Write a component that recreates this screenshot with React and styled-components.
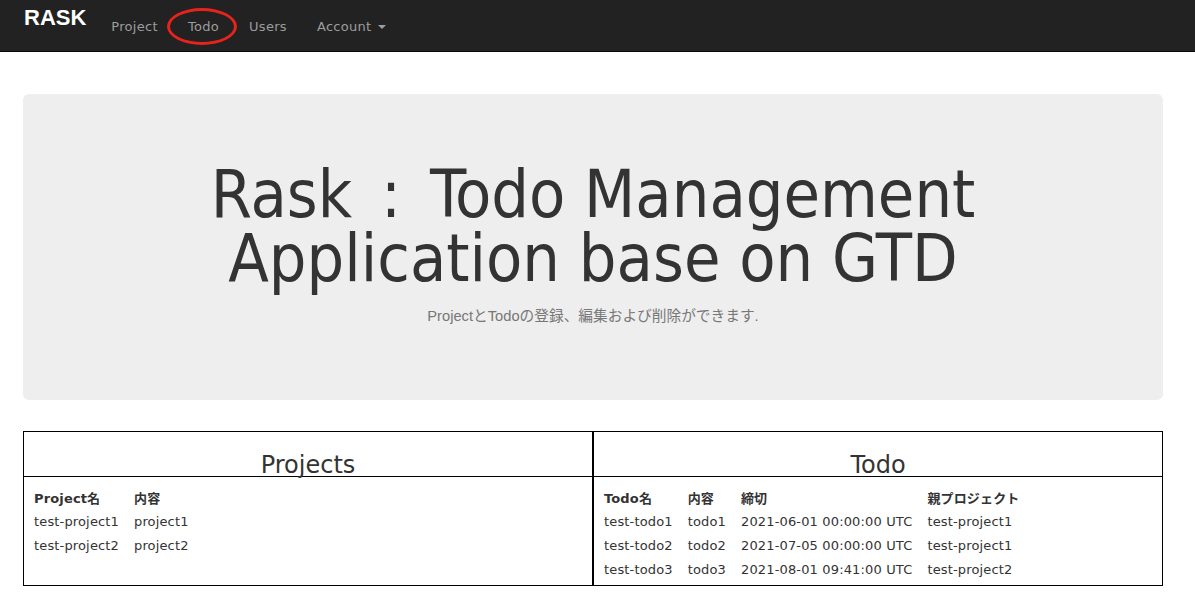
import styled, { createGlobalStyle } from "styled-components";

const GlobalStyle = createGlobalStyle`
    body {
        margin: 0;
        background: #fff;
        color: #333;
        font-family: "DejaVu Sans", "Noto Sans CJK JP", sans-serif;
    }
`;

const Navbar = styled.nav`
    height: 51px;
    background-color: #222;
    border-bottom: 1px solid #080808;
    display: flex;
    align-items: flex-start;
    padding-left: 24px;
`;

const Brand = styled.a`
    font-family: "Liberation Sans", Arial, sans-serif;
    font-weight: 700;
    font-size: 22px;
    line-height: 22px;
    color: #fff;
    margin-top: 7px;
    margin-right: 10px;
`;

const NavItem = styled.a`
    position: relative;
    font-family: "DejaVu Sans", sans-serif;
    font-size: 13px;
    letter-spacing: 0.3px;
    line-height: 18px;
    color: #9d9d9d;
    padding: 18px 15px 0;
    display: flex;
    align-items: center;
`;

const Caret = styled.span`
    display: inline-block;
    width: 0;
    height: 0;
    margin-left: 6px;
    border-top: 4px solid #9d9d9d;
    border-left: 4px solid transparent;
    border-right: 4px solid transparent;
`;

const Circle = styled.span`
    position: absolute;
    left: -6px;
    top: 8px;
    width: 64px;
    height: 31px;
    border: 3px solid #e8231b;
    border-radius: 50%;
`;

const Main = styled.div`
    padding: 42px 32px 0 23px;
`;

const Jumbotron = styled.div`
    background-color: #eee;
    border-radius: 6px;
    padding: 69px 20px 74px;
    text-align: center;
`;

const Title = styled.h1`
    margin: 0;
    font-family: "DejaVu Sans Condensed", "DejaVu Sans", sans-serif;
    font-stretch: condensed;
    font-weight: 400;
    font-size: 66px;
    line-height: 64px;
    color: #333;
`;

const Colon = styled.span`
    margin: 0 10px;
`;

const Lead = styled.p`
    margin: 15px 0 0;
    font-family: "Liberation Sans", "Noto Sans CJK JP", sans-serif;
    font-size: 14.7px;
    line-height: 20px;
    color: #777;
`;

const Panels = styled.div`
    display: flex;
    margin-top: 31px;
`;

const Panel = styled.section`
    flex: 1;
    border: 1px solid #000;
    display: flex;
    flex-direction: column;
`;

const PanelTitle = styled.h2`
    margin: 0;
    height: 45px;
    box-sizing: border-box;
    padding-top: 20px;
    border-bottom: 1px solid #000;
    text-align: center;
    font-weight: 400;
    font-size: 24px;
    line-height: 26px;
    color: #333;
`;

const PanelBody = styled.div`
    padding: 8px 10px 4px;
`;

const Table = styled.table`
    border-collapse: collapse;
    font-size: 13px;
    letter-spacing: 0.15px;
    color: #333;
`;

const Th = styled.th`
    text-align: left;
    font-weight: 700;
    padding: 0 15px 0 0;
    height: 24px;
    white-space: nowrap;
`;

const Td = styled.td`
    padding: 0 15px 0 0;
    height: 24px;
    white-space: nowrap;
`;

const projects = [
    ["test-project1", "project1"],
    ["test-project2", "project2"],
];

const todos = [
    ["test-todo1", "todo1", "2021-06-01 00:00:00 UTC", "test-project1"],
    ["test-todo2", "todo2", "2021-07-05 00:00:00 UTC", "test-project1"],
    ["test-todo3", "todo3", "2021-08-01 09:41:00 UTC", "test-project2"],
];

const App = () => {
    return (
        <>
            <GlobalStyle />
            <Navbar>
                <Brand>RASK</Brand>
                <NavItem>Project</NavItem>
                <NavItem>Todo<Circle /></NavItem>
                <NavItem>Users</NavItem>
                <NavItem>Account<Caret /></NavItem>
            </Navbar>
            <Main>
                <Jumbotron>
                    <Title>Rask <Colon>:</Colon> Todo Management<br />Application base on GTD</Title>
                    <Lead>ProjectとTodoの登録、編集および削除ができます.</Lead>
                </Jumbotron>
                <Panels>
                    <Panel>
                        <PanelTitle>Projects</PanelTitle>
                        <PanelBody>
                            <Table>
                                <thead>
                                    <tr><Th>Project名</Th><Th>内容</Th></tr>
                                </thead>
                                <tbody>
                                    {projects.map((p) => (
                                        <tr key={p[0]}>{p.map((c) => <Td key={c}>{c}</Td>)}</tr>
                                    ))}
                                </tbody>
                            </Table>
                        </PanelBody>
                    </Panel>
                    <Panel>
                        <PanelTitle>Todo</PanelTitle>
                        <PanelBody>
                            <Table>
                                <thead>
                                    <tr><Th>Todo名</Th><Th>内容</Th><Th>締切</Th><Th>親プロジェクト</Th></tr>
                                </thead>
                                <tbody>
                                    {todos.map((t) => (
                                        <tr key={t[0]}>{t.map((c, i) => <Td key={i}>{c}</Td>)}</tr>
                                    ))}
                                </tbody>
                            </Table>
                        </PanelBody>
                    </Panel>
                </Panels>
            </Main>
        </>
    );
};

export default App;
